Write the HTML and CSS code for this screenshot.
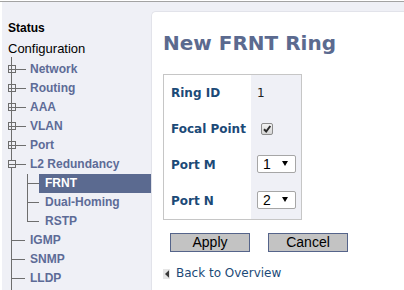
FILE: index.html
```html
<!DOCTYPE html>
<html>
<head>
<meta charset="utf-8">
<link rel="stylesheet" href="styles.css">
</head>
<body>
<div class="topline"></div>
<div class="frame">
  <nav class="sidebar">
    <div class="nav-title status">Status</div>
    <div class="nav-title config">Configuration</div>
    <div class="tree">
      <div class="row"><svg class="conn" width="26" height="19" viewBox="0 0 26 19"><rect x="6.5" y="5.5" width="7" height="7" fill="#eff0f6" stroke="#6e6e6e"/><path d="M7 9.5h6M9.5 6v6M14 9.5h10" stroke="#6e6e6e" fill="none"/></svg><span class="label top">Network</span></div>
      <div class="row"><svg class="conn" width="26" height="19" viewBox="0 0 26 19"><rect x="6.5" y="5.5" width="7" height="7" fill="#eff0f6" stroke="#6e6e6e"/><path d="M7 9.5h6M9.5 6v6M14 9.5h10" stroke="#6e6e6e" fill="none"/></svg><span class="label top">Routing</span></div>
      <div class="row"><svg class="conn" width="26" height="19" viewBox="0 0 26 19"><rect x="6.5" y="5.5" width="7" height="7" fill="#eff0f6" stroke="#6e6e6e"/><path d="M7 9.5h6M9.5 6v6M14 9.5h10" stroke="#6e6e6e" fill="none"/></svg><span class="label top">AAA</span></div>
      <div class="row"><svg class="conn" width="26" height="19" viewBox="0 0 26 19"><rect x="6.5" y="5.5" width="7" height="7" fill="#eff0f6" stroke="#6e6e6e"/><path d="M7 9.5h6M9.5 6v6M14 9.5h10" stroke="#6e6e6e" fill="none"/></svg><span class="label top">VLAN</span></div>
      <div class="row"><svg class="conn" width="26" height="19" viewBox="0 0 26 19"><rect x="6.5" y="5.5" width="7" height="7" fill="#eff0f6" stroke="#6e6e6e"/><path d="M7 9.5h6M9.5 6v6M14 9.5h10" stroke="#6e6e6e" fill="none"/></svg><span class="label top">Port</span></div>
      <div class="row"><svg class="conn" width="26" height="19" viewBox="0 0 26 19"><rect x="6.5" y="5.5" width="7" height="7" fill="#eff0f6" stroke="#6e6e6e"/><path d="M7 9.5h6M14 9.5h10" stroke="#6e6e6e" fill="none"/></svg><span class="label top">L2 Redundancy</span></div>
      <div class="subtree">
        <div class="row"><svg class="conn-sub" width="37" height="19" viewBox="0 0 37 19"><path d="M25 9.5h12" stroke="#6e6e6e" fill="none"/></svg><span class="label sublabel active">FRNT</span></div>
        <div class="row"><svg class="conn-sub" width="37" height="19" viewBox="0 0 37 19"><path d="M25 9.5h12" stroke="#6e6e6e" fill="none"/></svg><span class="label sublabel">Dual-Homing</span></div>
        <div class="row"><svg class="conn-sub" width="37" height="19" viewBox="0 0 37 19"><path d="M25 9.5h12" stroke="#6e6e6e" fill="none"/></svg><span class="label sublabel">RSTP</span></div>
      </div>
      <div class="row"><svg class="conn" width="26" height="19" viewBox="0 0 26 19"><path d="M9 9.5h14" stroke="#6e6e6e" fill="none"/></svg><span class="label top">IGMP</span></div>
      <div class="row"><svg class="conn" width="26" height="19" viewBox="0 0 26 19"><path d="M9 9.5h14" stroke="#6e6e6e" fill="none"/></svg><span class="label top">SNMP</span></div>
      <div class="row"><svg class="conn" width="26" height="19" viewBox="0 0 26 19"><path d="M9 9.5h14" stroke="#6e6e6e" fill="none"/></svg><span class="label top">LLDP</span></div>
    </div>
  </nav>
  <main class="main">
    <section class="panel">
      <h1 class="title">New FRNT Ring</h1>
      <div class="form">
        <div class="cell key">Ring ID</div>
        <div class="cell value"><span class="num">1</span></div>
        <div class="cell key">Focal Point</div>
        <div class="cell value"><span class="check"><svg width="10" height="10" viewBox="0 0 10 10"><path d="M2 5.2l2.2 2.3L8.3 2" stroke="#2a2a2a" stroke-width="2" fill="none"/></svg></span></div>
        <div class="cell key">Port M</div>
        <div class="cell value"><span class="select-wrap"><select class="select"><option>1</option><option>2</option></select></span></div>
        <div class="cell key">Port N</div>
        <div class="cell value"><span class="select-wrap"><select class="select"><option>2</option><option>1</option></select></span></div>
      </div>
      <div class="actions">
        <button class="btn" type="button">Apply</button>
        <button class="btn" type="button">Cancel</button>
      </div>
      <a class="back" href="#"><svg class="back-icon" width="7" height="10" viewBox="0 0 7 10"><rect width="7" height="10" fill="#e6e6e6"/><path d="M2 5L6 1.2V8.8Z" fill="#3a3a3a"/></svg><span>Back to Overview</span></a>
    </section>
  </main>
</div>
</body>
</html>
```

FILE: styles.css
```css
html, body {
  margin: 0;
  padding: 0;
  background: #ffffff;
  overflow: hidden;
}

.topline {
  height: 1px;
  background: #ffffff;
  border-bottom: 1px solid #a3a3a3;
}

.frame {
  display: flex;
  margin-left: 2px;
  height: 288px;
  background: #eff0f6;
}

.sidebar {
  width: 149px;
  flex: none;
  display: flex;
  flex-direction: column;
  padding-top: 17px;
  box-sizing: border-box;
  font-family: "Liberation Sans", Arial, sans-serif;
}

.nav-title {
  padding-left: 6px;
  color: #000000;
}

.status {
  font-weight: bold;
  font-size: 12px;
  line-height: 19px;
  height: 19px;
}

.config {
  margin-top: 2px;
  font-size: 13px;
  line-height: 17px;
  height: 17px;
}

.tree {
  flex: 1;
  padding-top: 3px;
  background: linear-gradient(#6e6e6e, #6e6e6e) no-repeat;
  background-position: 9px 0;
  background-size: 1px 100%;
}

.subtree {
  background: linear-gradient(#6e6e6e, #6e6e6e) no-repeat;
  background-position: 25px 0;
  background-size: 1px calc(100% - 9px);
}

.row {
  display: flex;
  height: 19px;
  align-items: stretch;
}

.conn, .conn-sub {
  flex: none;
  display: block;
}

.label {
  font-size: 12px;
  font-weight: bold;
  line-height: 19px;
  color: #5d6b97;
  white-space: nowrap;
}

.top {
  padding-left: 2px;
}

.sublabel {
  flex: 1;
  padding-left: 6px;
}

.active {
  background: #5b6a90;
  color: #ffffff;
}

.main {
  flex: 1;
  padding-top: 9px;
  display: flex;
  flex-direction: column;
  min-width: 0;
}

.panel {
  flex: 1;
  background: #ffffff;
  border: 1px solid #e2e3ea;
  border-right: 0;
  border-bottom: 0;
  border-top-left-radius: 5px;
  padding: 19px 0 0 11px;
}

.title {
  margin: 0 0 19px;
  font-family: "DejaVu Sans", Verdana, sans-serif;
  font-weight: bold;
  font-size: 20px;
  line-height: 24px;
  color: #5b6a8f;
}

.form {
  display: grid;
  grid-template-columns: 87px 50px;
  grid-auto-rows: 36px;
  width: max-content;
  border: 1px solid #c6c6c6;
}

.cell {
  display: flex;
  align-items: center;
  font-family: "DejaVu Sans", Verdana, sans-serif;
  font-size: 12px;
}

.key {
  padding-left: 7px;
  font-weight: bold;
  color: #1c4a77;
  white-space: nowrap;
}

.value {
  background: #eff0f6;
  padding-left: 6px;
  color: #222222;
}

.num {
  font-size: 12px;
}

.check {
  margin-left: 4px;
  width: 12px;
  height: 12px;
  box-sizing: border-box;
  border: 1px solid #8c8c8c;
  border-radius: 2px;
  background: linear-gradient(#f2f2f2, #d6d6d6);
  display: flex;
  align-items: center;
  justify-content: center;
  margin-top: -1px;
}

.select-wrap {
  position: relative;
  display: block;
  margin-top: -2px;
}

.select-wrap::after {
  content: "";
  position: absolute;
  right: 8px;
  top: 6px;
  border-left: 3px solid transparent;
  border-right: 3px solid transparent;
  border-top: 5px solid #000000;
  pointer-events: none;
}

.select {
  appearance: none;
  -webkit-appearance: none;
  display: block;
  width: 39px;
  height: 18px;
  box-sizing: border-box;
  margin: 0;
  padding: 0 0 0 5px;
  border: 1px solid #a6a6a6;
  border-radius: 2px;
  background: #ffffff;
  font-family: "Liberation Sans", Arial, sans-serif;
  font-size: 14px;
  line-height: 16px;
  color: #000000;
}

.actions {
  display: flex;
  gap: 18px;
  margin-top: 13px;
  padding-left: 7px;
}

.btn {
  width: 80px;
  height: 19px;
  box-sizing: border-box;
  margin: 0;
  padding: 0;
  border: 1px solid #55648a;
  background: #c3c3c3;
  font-family: "Liberation Sans", Arial, sans-serif;
  font-size: 14px;
  line-height: 17px;
  color: #000000;
}

.back {
  display: flex;
  align-items: center;
  gap: 6px;
  margin-top: 14px;
  font-family: "DejaVu Sans", Verdana, sans-serif;
  font-size: 12px;
  line-height: 15px;
  color: #1c4a77;
  text-decoration: none;
}

.back-icon {
  display: block;
  flex: none;
}
```
